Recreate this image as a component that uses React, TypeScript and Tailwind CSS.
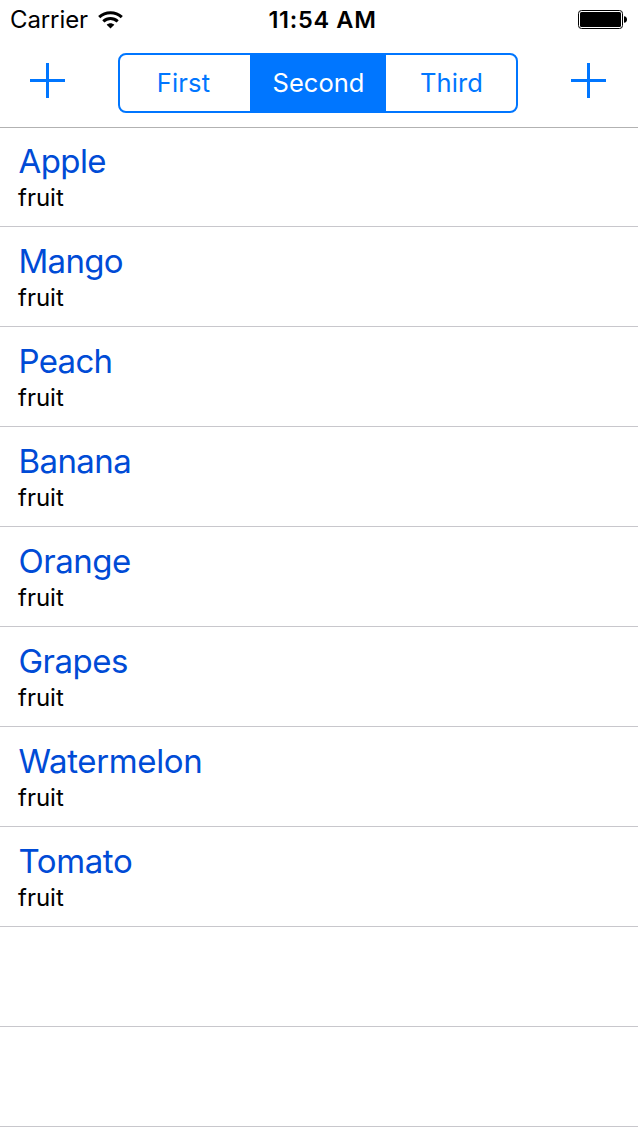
import React from "react";

const fruits: { name: string; tracking: string }[] = [
  { name: "Apple", tracking: "tracking-[-0.6px]" },
  { name: "Mango", tracking: "tracking-[-0.7px]" },
  { name: "Peach", tracking: "tracking-[-0.7px]" },
  { name: "Banana", tracking: "tracking-[-0.6px]" },
  { name: "Orange", tracking: "tracking-[-0.5px]" },
  { name: "Grapes", tracking: "tracking-[-0.5px]" },
  { name: "Watermelon", tracking: "tracking-[-0.35px]" },
  { name: "Tomato", tracking: "tracking-[-0.4px]" },
];

function Plus() {
  return (
    <svg width="35" height="35" viewBox="0 0 35 35" fill="#0076ff">
      <rect x="0" y="16" width="35" height="3" />
      <rect x="16" y="0" width="3" height="35" />
    </svg>
  );
}

function Wifi() {
  return (
    <svg width="25" height="18" viewBox="0 0 25 18" fill="none" stroke="#000" strokeWidth="3">
      <path d="M1.2 6.2 C7.5 0.2 17.5 0.2 23.8 6.2" />
      <path d="M5.3 10.4 C9.5 6.5 15.5 6.5 19.7 10.4" />
      <path d="M8.7 13.8 C11 11.8 14 11.8 16.3 13.8 L12.5 17.6 Z" fill="#000" stroke="none" />
    </svg>
  );
}

function Battery() {
  return (
    <svg width="49" height="19" viewBox="0 0 49 19">
      <rect x="0.5" y="0.5" width="44" height="18" rx="3" fill="none" stroke="#000" />
      <rect x="2" y="2" width="41" height="15" rx="1.5" />
      <path d="M46 6.2 Q49 6.5 49 9.5 Q49 12.5 46 12.8 Z" />
    </svg>
  );
}

export default function App() {
  return (
    <main className="h-[1127px] w-[638px] overflow-hidden bg-white font-['Inter',sans-serif] text-black">
      <header className="h-32 border-b border-[#b2b2b2]">
        <div className="grid h-10 grid-cols-3 items-center pr-[11px] pl-[10px]">
          <div className="flex items-center gap-[10px]">
            <span className="text-[24px] leading-10 tracking-[-0.1px]">Carrier</span>
            <Wifi />
          </div>
          <span className="pl-[8px] text-center text-[23.5px] leading-10 font-semibold tracking-[0.7px] whitespace-nowrap">11:54 AM</span>
          <div className="flex justify-end pb-px">
            <Battery />
          </div>
        </div>
        <div className="flex items-start pt-[13px] pl-[30px]">
          <button className="mt-[10px]" aria-label="Add left"><Plus /></button>
          <div className="ml-[53px] flex h-[60px] w-[400px] overflow-hidden rounded-[8px] border-2 border-[#0076ff] text-[25.5px] leading-[56px] text-[#0076ff]">
            <button className="w-[130px] pr-[3px] tracking-[0.2px]">First</button>
            <button className="w-[136px] bg-[#0076ff] pl-px text-white">Second</button>
            <button className="flex-1 pl-px tracking-[0.1px]">Third</button>
          </div>
          <button className="mt-[10px] ml-[53px]" aria-label="Add right"><Plus /></button>
        </div>
      </header>
      <ul className="-mt-px">
        {fruits.map((fruit) => (
          <li key={fruit.name} className="h-[100px] border-b border-[#c8c7cc] pt-[13px] pl-[18px]">
            <div className={`pl-[0.5px] text-[33px] leading-[42px] text-[#004bd6] ${fruit.tracking}`}>{fruit.name}</div>
            <div className="mt-px text-[24px] leading-[30px]">fruit</div>
          </li>
        ))}
        <li className="h-[100px] border-b border-[#c8c7cc]" />
        <li className="h-[100px] border-b border-[#c8c7cc]" />
      </ul>
    </main>
  );
}
